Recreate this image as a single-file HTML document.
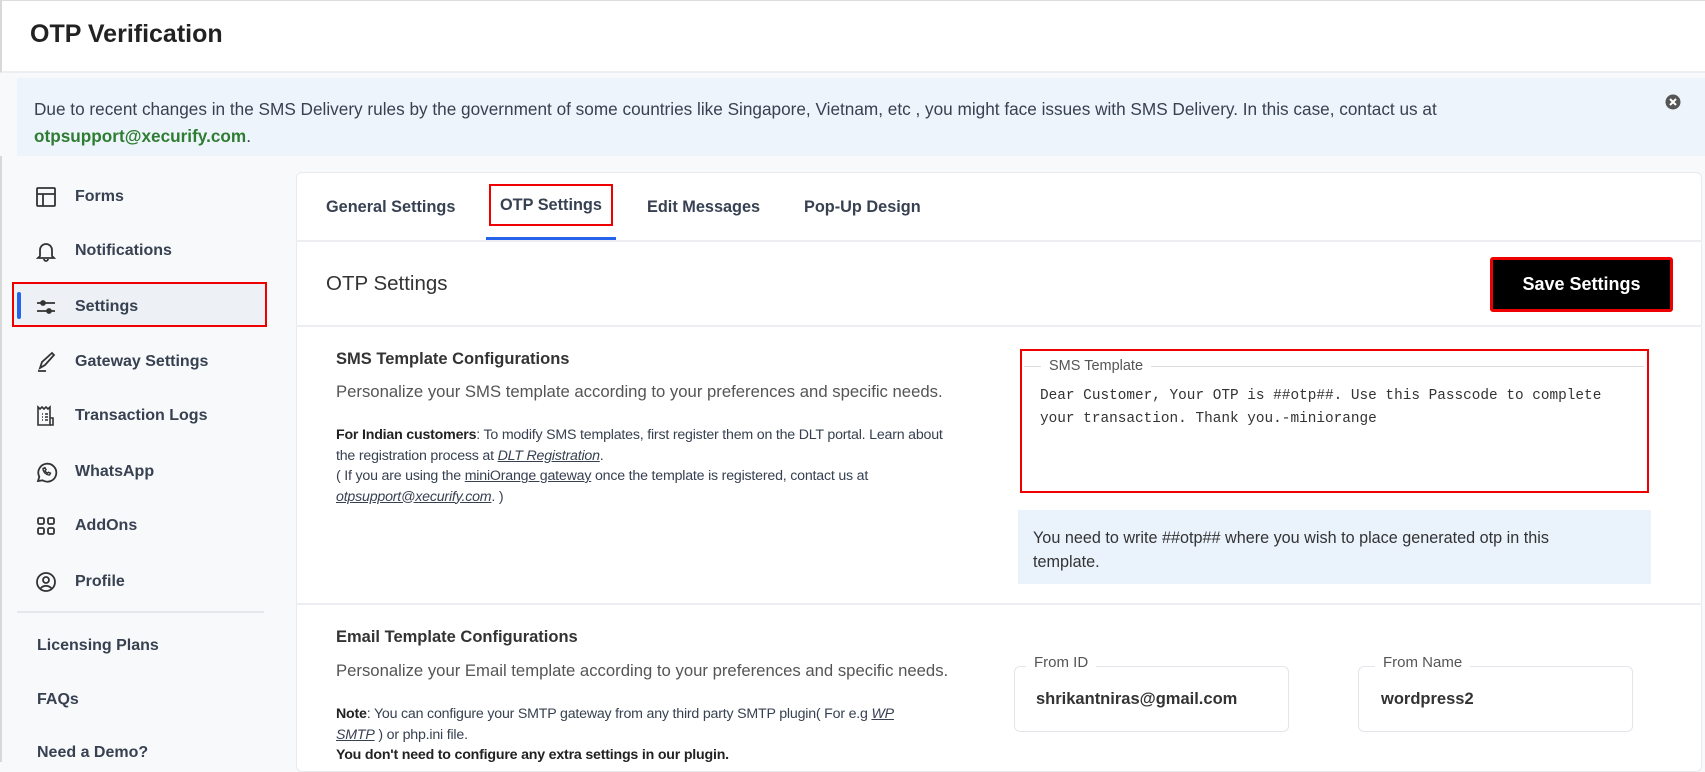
<!DOCTYPE html>
<html><head><meta charset="utf-8"><style>
*{box-sizing:border-box;margin:0;padding:0}
body{width:1705px;height:762px;overflow:hidden;background:#f8f9fb;font-family:"Liberation Sans",sans-serif;color:#1f2937;position:relative}
.a{position:absolute;white-space:nowrap}
.nav{position:absolute;left:75px;font-size:16px;font-weight:bold;color:#374151;transform:translateY(-50%)}
.ic{position:absolute;left:34px;width:24px;height:24px;transform:translateY(-50%)}
.sm{font-size:14.2px;color:#374151;line-height:20.5px;letter-spacing:-0.2px}
</style></head><body>
<div class="a" style="left:0;top:0;width:1705px;height:73px;background:#fff;border-bottom:2px solid #eceef1;border-left:2px solid #d8d8d8;border-top:1px solid #ddd"></div>
<div class="a" style="left:30px;top:20px;font-size:25px;font-weight:bold;color:#222">OTP Verification</div>
<div class="a" style="left:17px;top:78px;width:1688px;height:78px;background:#eef4fb"></div>
<div class="a" style="left:34px;top:96px;font-size:17.2px;color:#374151;line-height:27px">Due to recent changes in the SMS Delivery rules by the government of some countries like Singapore, Vietnam, etc , you might face issues with SMS Delivery. In this case, contact us at<br><span style="color:#2e7d32;font-weight:bold">otpsupport@xecurify.com</span>.</div>
<svg class="a" style="left:1665px;top:94px" width="16" height="16" viewBox="0 0 16 16"><circle cx="8" cy="8" r="7.5" fill="#555"/><path d="M5 5l6 6M11 5l-6 6" stroke="#fff" stroke-width="2"/></svg>
<div class="a" style="left:0;top:156px;width:2px;height:606px;background:#d8d8d8"></div>

<div class="a" style="left:12px;top:282px;width:255px;height:45px;background:#edf0f5;border:2px solid #e00"></div>
<div class="a" style="left:17px;top:292px;width:4px;height:27px;background:#2563eb;border-radius:2px"></div>
<svg class="ic" style="top:197px" viewBox="0 0 24 24" fill="none" stroke="#333" stroke-width="1.8"><rect x="3" y="3" width="18" height="18" rx="1"/><path d="M3 9h18M9 9v12"/></svg>
<svg class="ic" style="top:251px" viewBox="0 0 24 24" fill="none" stroke="#333" stroke-width="1.8"><path d="M6 17V11a6 6 0 0112 0v6l2 2H4z"/><path d="M10 20a2 2 0 004 0"/></svg>
<svg class="ic" style="top:307px" viewBox="0 0 24 24" fill="none" stroke="#333" stroke-width="1.8"><path d="M3 8h18M3 16h18"/><circle cx="9" cy="8" r="2" fill="#333"/><circle cx="15" cy="16" r="2" fill="#333"/></svg>
<svg class="ic" style="top:362px" viewBox="0 0 24 24" fill="none" stroke="#333" stroke-width="1.8"><path d="M4 21h8M6 18l2-6 10-9 2 2-9 10z"/></svg>
<svg class="ic" style="top:416px" viewBox="0 0 24 24" fill="none" stroke="#333" stroke-width="1.6"><path d="M4 3l2 2 2-2 2 2 2-2 2 2 2-2v18H4z"/><path d="M16 14h3v7h-3M8 10h1M11 10h3M8 13h1M11 13h3M8 16h1M11 16h3"/></svg>
<svg class="ic" style="top:472px" viewBox="0 0 24 24" fill="none" stroke="#333" stroke-width="1.8"><path d="M4 21l1.3-4.2A9 9 0 1 1 8.5 20.3z"/><path d="M9 8.5c0 3.5 3 6.5 6.5 6.5l1-1.8-2-1-1 1c-1-.5-2-1.5-2.5-2.5l1-1-1-2z" stroke-width="1.4"/></svg>
<svg class="ic" style="top:526px" viewBox="0 0 24 24" fill="none" stroke="#333" stroke-width="1.8"><rect x="4" y="4" width="6" height="6" rx="1.5"/><rect x="14" y="4" width="6" height="6" rx="1.5"/><rect x="4" y="14" width="6" height="6" rx="1.5"/><rect x="14" y="14" width="6" height="6" rx="1.5"/></svg>
<svg class="ic" style="top:582px" viewBox="0 0 24 24" fill="none" stroke="#333" stroke-width="1.8"><circle cx="12" cy="12" r="9"/><circle cx="12" cy="10" r="3"/><path d="M6.5 18.5a7 7 0 0111 0"/></svg>
<div class="nav" style="top:197px">Forms</div>
<div class="nav" style="top:251px">Notifications</div>
<div class="nav" style="top:307px">Settings</div>
<div class="nav" style="top:362px">Gateway Settings</div>
<div class="nav" style="top:416px">Transaction Logs</div>
<div class="nav" style="top:472px">WhatsApp</div>
<div class="nav" style="top:526px">AddOns</div>
<div class="nav" style="top:582px">Profile</div>
<div class="a" style="left:17px;top:611px;width:247px;height:2px;background:#e5e7eb"></div>
<div class="nav" style="left:37px;top:646px">Licensing Plans</div>
<div class="nav" style="left:37px;top:700px">FAQs</div>
<div class="nav" style="left:37px;top:753px">Need a Demo?</div>

<div class="a" style="left:296px;top:172px;width:1406px;height:600px;background:#fff;border:1px solid #e8eaee;border-radius:6px"></div>
<div class="a" style="left:296px;top:240px;width:1406px;height:2px;background:#eceef1"></div>
<div class="a" style="left:326px;top:198px;font-size:16.3px;font-weight:bold;color:#374151">General Settings</div>
<div class="a" style="left:489px;top:184px;width:124px;height:42px;border:2px solid #e00"></div>
<div class="a" style="left:500px;top:196px;font-size:16.3px;font-weight:bold;color:#374151">OTP Settings</div>
<div class="a" style="left:486px;top:237px;width:130px;height:3px;background:#2563eb"></div>
<div class="a" style="left:647px;top:198px;font-size:16.3px;font-weight:bold;color:#374151">Edit Messages</div>
<div class="a" style="left:804px;top:198px;font-size:16.3px;font-weight:bold;color:#374151">Pop-Up Design</div>
<div class="a" style="left:326px;top:272px;font-size:20.5px;color:#333">OTP Settings</div>
<div class="a" style="left:1490px;top:257px;width:183px;height:55px;background:#000;border:3px solid #e00;border-radius:3px;color:#fff;font-weight:bold;font-size:18px;text-align:center;line-height:49px">Save Settings</div>
<div class="a" style="left:296px;top:325px;width:1406px;height:2px;background:#eceef1"></div>

<div class="a" style="left:336px;top:350px;font-size:16.5px;font-weight:bold;color:#333">SMS Template Configurations</div>
<div class="a" style="left:336px;top:382px;font-size:16.7px;color:#555">Personalize your SMS template according to your preferences and specific needs.</div>
<div class="a sm" style="left:336px;top:425px"><b style="color:#222">For Indian customers</b>: To modify SMS templates, first register them on the DLT portal. Learn about<br>the registration process at <i><u>DLT Registration</u></i>.<br>( If you are using the <u>miniOrange gateway</u> once the template is registered, contact us at<br><i><u>otpsupport@xecurify.com</u></i>. )</div>
<div class="a" style="left:1020px;top:349px;width:629px;height:144px;border:2px solid #e00"></div>
<div class="a" style="left:1024px;top:366px;width:620px;height:1px;background:#ddd"></div>
<div class="a" style="left:1041px;top:358px;padding:0 8px;background:#fff;font-size:14.5px;color:#555">SMS Template</div>
<div class="a" style="left:1040px;top:385px;font-family:'Liberation Mono',monospace;font-size:14.4px;line-height:23px;color:#333">Dear Customer, Your OTP is ##otp##. Use this Passcode to complete<br>your transaction. Thank you.-miniorange</div>
<div class="a" style="left:1018px;top:510px;width:633px;height:74px;background:#eaf2fc"></div>
<div class="a" style="left:1033px;top:526px;font-size:16.2px;line-height:24px;color:#333">You need to write ##otp## where you wish to place generated otp in this<br>template.</div>
<div class="a" style="left:296px;top:603px;width:1406px;height:2px;background:#eceef1"></div>

<div class="a" style="left:336px;top:628px;font-size:16.5px;font-weight:bold;color:#333">Email Template Configurations</div>
<div class="a" style="left:336px;top:661px;font-size:16.7px;color:#555">Personalize your Email template according to your preferences and specific needs.</div>
<div class="a sm" style="left:336px;top:704px"><b style="color:#222">Note</b>: You can configure your SMTP gateway from any third party SMTP plugin( For e.g <i><u>WP</u></i><br><i><u>SMTP</u></i> ) or php.ini file.<br><b style="color:#222">You don't need to configure any extra settings in our plugin.</b></div>
<div class="a" style="left:1014px;top:666px;width:275px;height:66px;border:1.5px solid #e2e5ea;border-radius:6px"></div>
<div class="a" style="left:1026px;top:654px;padding:0 8px;background:#fff;font-size:15px;color:#555">From ID</div>
<div class="a" style="left:1036px;top:690px;font-size:16.5px;font-weight:bold;color:#333">shrikantniras@gmail.com</div>
<div class="a" style="left:1358px;top:666px;width:275px;height:66px;border:1.5px solid #e2e5ea;border-radius:6px"></div>
<div class="a" style="left:1375px;top:654px;padding:0 8px;background:#fff;font-size:15px;color:#555">From Name</div>
<div class="a" style="left:1381px;top:690px;font-size:16.5px;font-weight:bold;color:#333">wordpress2</div>
</body></html>
